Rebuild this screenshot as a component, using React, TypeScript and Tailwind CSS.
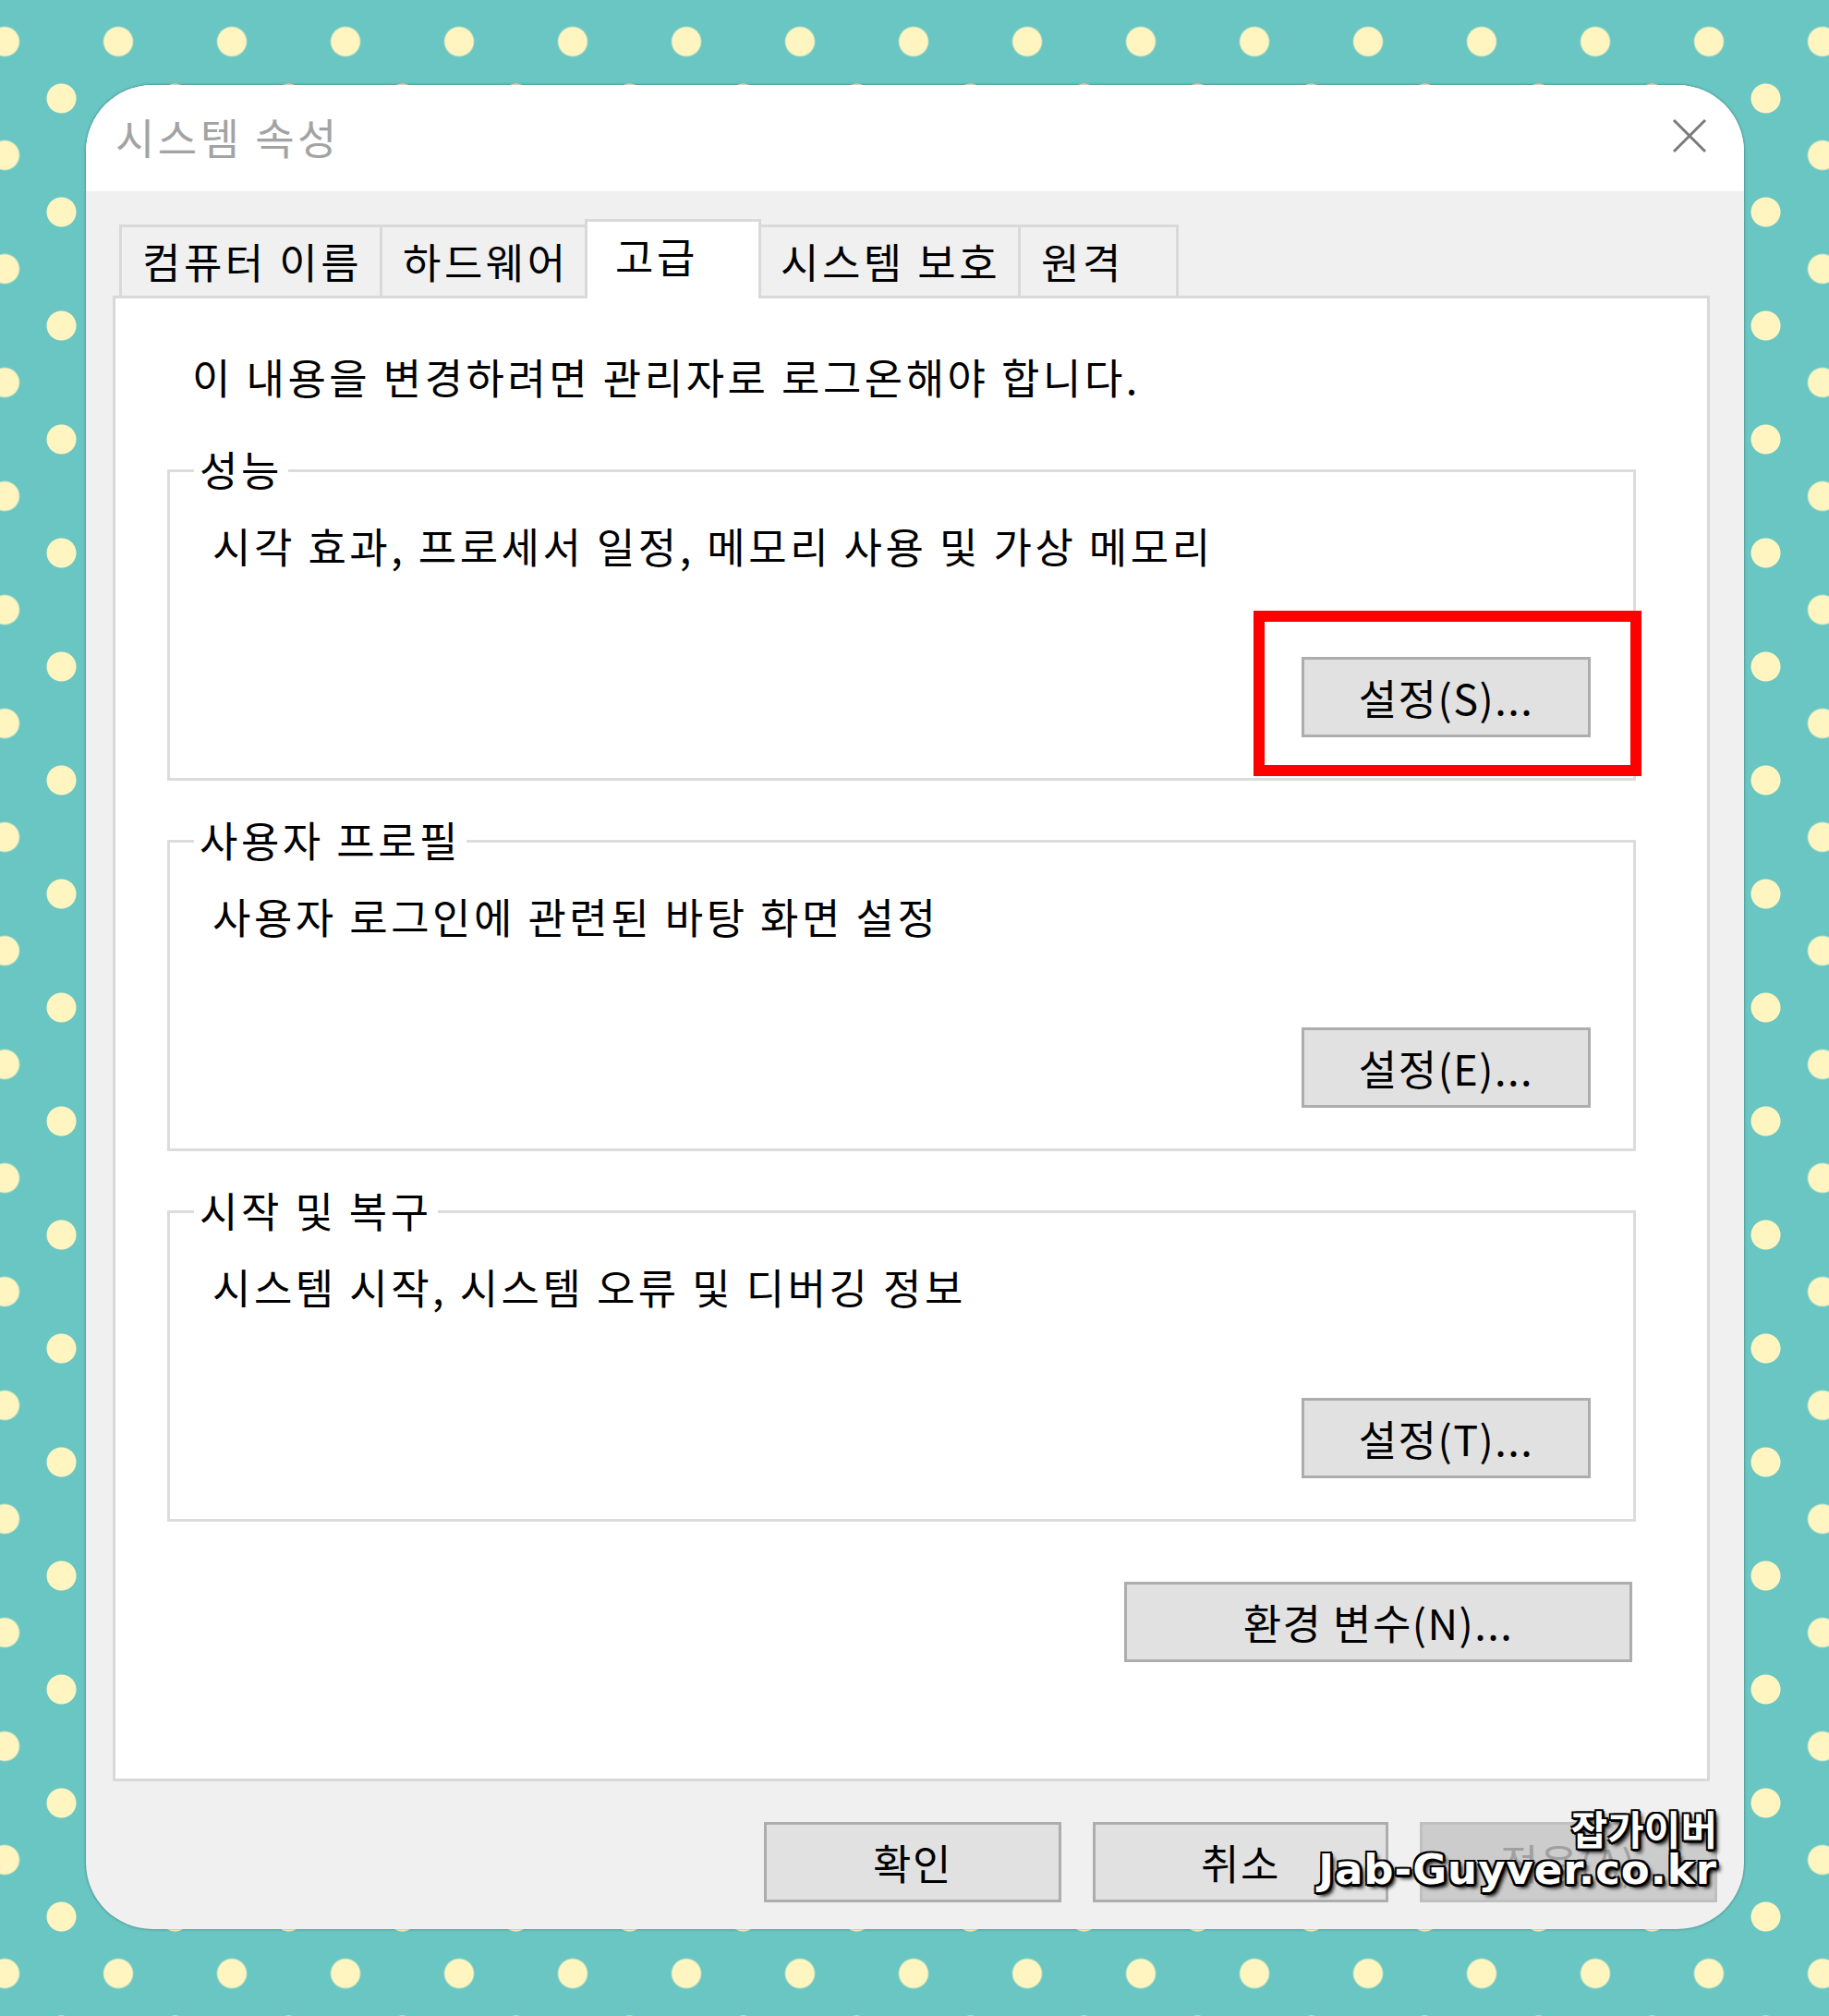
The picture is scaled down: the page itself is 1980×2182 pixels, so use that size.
import React from 'react';

const TABS: { label: string; width: string; active?: boolean }[] = [
  { label: '컴퓨터 이름', width: 'w-[282px]' },
  { label: '하드웨어', width: 'w-[222px]' },
  { label: '고급', width: 'w-[191px]', active: true },
  { label: '시스템 보호', width: 'w-[278px]' },
  { label: '원격', width: 'w-[174px]' },
];

const GROUPS = [
  { title: '성능', desc: '시각 효과, 프로세서 일정, 메모리 사용 및 가상 메모리', button: '설정(S)...', marked: true },
  { title: '사용자 프로필', desc: '사용자 로그인에 관련된 바탕 화면 설정', button: '설정(E)...' },
  { title: '시작 및 복구', desc: '시스템 시작, 시스템 오류 및 디버깅 정보', button: '설정(T)...' },
];

function WinButton({ label, className = '', disabled = false }: { label: string; className?: string; disabled?: boolean }) {
  return (
    <button
      disabled={disabled}
      className={`h-[87px] border-[3px] flex items-center justify-center leading-[54px] tracking-[1.5px] ${
        disabled
          ? 'bg-[#cccccc] border-[#bfbfbf] text-[#a0a0a0]'
          : 'bg-[#e1e1e1] border-[#adadad] text-black'
      } ${className}`}
    >
      {label}
    </button>
  );
}

export default function App() {
  return (
    <div className="relative w-[1980px] h-[2182px] overflow-hidden pt-[92px] pl-[93px] bg-[#69c6c2] bg-[radial-gradient(circle,#fff5c0_15.5px,transparent_16.5px),radial-gradient(circle,#fff5c0_15.5px,transparent_16.5px)] bg-[length:123px_123px] bg-[position:-56.5px_-16.5px,5px_45px] font-['Noto_Sans_CJK_KR','Noto_Sans',sans-serif] text-[45px] tracking-[3.5px]">
      {/* Dialog */}
      <div className="w-[1795px] h-[1996px] rounded-[72px] overflow-hidden bg-[#f0f0f0] flex flex-col shadow-[0_0_3px_rgba(0,0,0,0.45)]">
        {/* Title bar */}
        <div className="h-[115px] bg-white flex items-center justify-between pl-[32px] pr-[40px] pb-[6px]">
          <span className="text-[46px] leading-[54px] text-[#a3a3a3]">시스템 속성</span>
          <svg width="38" height="38" viewBox="0 0 38 38">
            <path d="M2 2 L36 36 M36 2 L2 36" stroke="#7a7a7a" strokeWidth="3" fill="none" />
          </svg>
        </div>

        {/* Body */}
        <div className="flex-1 flex flex-col pt-[30px] pl-[29px] pr-[37px]">
          {/* Tabs */}
          <div className="relative z-10 flex items-end h-[86px] -mb-[3px] pl-[7px]">
            {TABS.map((t, i) =>
              t.active ? (
                <div
                  key={t.label}
                  className={`${t.width} h-[86px] bg-white border-[3px] border-b-0 border-[#d9d9d9] flex items-center pl-[30px] pb-[10px] leading-[54px]`}
                >
                  {t.label}
                </div>
              ) : (
                <div
                  key={t.label}
                  className={`${t.width} h-[77px] mb-[3px] bg-[#f0f0f0] border-t-[3px] border-[#d9d9d9] ${
                    i === TABS.length - 1 ? 'border-r-[3px]' : ''
                  } ${TABS[i - 1]?.active ? 'pl-[21px]' : 'border-l-[3px] pl-[22px]'} flex items-center leading-[54px]`}
                >
                  {t.label}
                </div>
              )
            )}
          </div>

          {/* Tab panel */}
          <div className="h-[1608px] bg-white border-[3px] border-[#d9d9d9] flex flex-col">
            <p className="mt-[58px] pl-[83px] leading-[54px]">이 내용을 변경하려면 관리자로 로그온해야 합니다.</p>

            <div className="mt-[73px] ml-[56px] w-[1590px] flex flex-col gap-[64px]">
              {GROUPS.map((g) => (
                <div key={g.title} className="relative h-[337px] border-[3px] border-[#dcdcdc] flex flex-col">
                  <span className="absolute left-[26px] top-[-3px] -translate-y-1/2 bg-white px-[6px] leading-[54px]">
                    {g.title}
                  </span>
                  <p className="mt-[53px] pl-[46px] leading-[54px]">{g.desc}</p>
                  <div className="mt-[93px] pr-[46px] flex justify-end">
                    <WinButton label={g.button} className="w-[313px] h-[86px]" />
                  </div>
                  {g.marked && (
                    <div className="absolute left-[1173px] top-[150px] w-[420px] h-[179px] border-[12px] border-[#ff0000]" />
                  )}
                </div>
              ))}
            </div>

            <div className="mt-[65px] pr-[81px] flex justify-end">
              <WinButton label="환경 변수(N)..." className="w-[550px]" />
            </div>
          </div>

          {/* Bottom buttons */}
          <div className="mt-[44px] -mr-[8px] flex justify-end gap-[34px]">
            <WinButton label="확인" className="w-[322px]" />
            <WinButton label="취소" className="w-[320px]" />
            <WinButton label="적용(A)" className="w-[322px]" disabled />
          </div>
        </div>
      </div>

      {/* Watermark */}
      <div className="absolute right-[121px] top-[1955px] flex flex-col items-end tracking-normal text-white [text-shadow:-2px_-2px_0_#000,2px_-2px_0_#000,-2px_2px_0_#000,2px_2px_0_#000,0_3px_0_#000,3px_0_0_#000,4px_4px_4px_#000]">
        <span className="font-['Noto_Sans_CJK_KR',sans-serif] font-bold text-[43px] leading-[46px]">잡가이버</span>
        <span className="font-['DejaVu_Sans',sans-serif] font-bold text-[45px] leading-[46px] tracking-[1px]">Jab-Guyver.co.kr</span>
      </div>
    </div>
  );
}
